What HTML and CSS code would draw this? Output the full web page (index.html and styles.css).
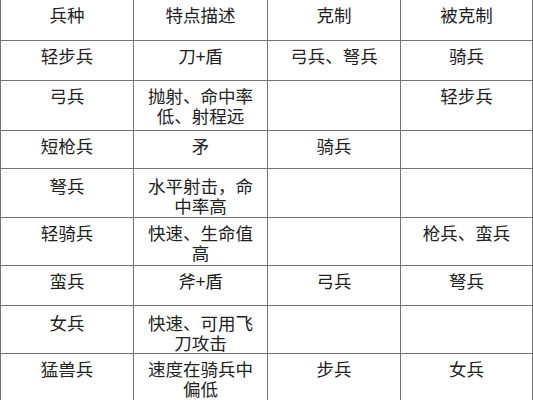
FILE: index.html
```html
<!DOCTYPE html>
<html lang="zh-CN">
<head>
<meta charset="utf-8">
<title>兵种</title>
<link rel="stylesheet" href="styles.css">
</head>
<body>
<table class="grid">
  <colgroup>
    <col class="c1"><col class="c2"><col class="c3"><col class="c4">
  </colgroup>
  <tr class="head h40"><td>兵种</td><td>特点描述</td><td>克制</td><td>被克制</td></tr>
  <tr class="h40"><td>轻步兵</td><td>刀+盾</td><td>弓兵、弩兵</td><td>骑兵</td></tr>
  <tr class="h50"><td>弓兵</td><td>抛射、命中率低、射程远</td><td></td><td>轻步兵</td></tr>
  <tr class="h38"><td>短枪兵</td><td>矛</td><td>骑兵</td><td></td></tr>
  <tr class="h49 low"><td>弩兵</td><td>水平射击，命中率高</td><td></td><td></td></tr>
  <tr class="h48"><td>轻骑兵</td><td>快速、生命值高</td><td></td><td>枪兵、蛮兵</td></tr>
  <tr class="h40"><td>蛮兵</td><td>斧+盾</td><td>弓兵</td><td>弩兵</td></tr>
  <tr class="h48 low"><td>女兵</td><td>快速、可用飞刀攻击</td><td></td><td></td></tr>
  <tr class="h52"><td>猛兽兵</td><td>速度在骑兵中偏低</td><td>步兵</td><td>女兵</td></tr>
</table>
</body>
</html>
```

FILE: styles.css
```css
html, body {
  margin: 0;
  padding: 0;
  background: #ffffff;
}

body {
  font-family: "Noto Sans CJK SC", "Liberation Sans", sans-serif;
  color: #222222;
  overflow: hidden;
}

.grid {
  border-collapse: collapse;
  table-layout: fixed;
  width: 532px;
  margin: 0;
}

.c1 { width: 133px; }
.c2 { width: 134px; }
.c3 { width: 133px; }
.c4 { width: 132px; }

.grid td {
  border: 1px solid #737373;
  text-align: center;
  vertical-align: top;
  font-size: 17.5px;
  line-height: 20px;
  padding: 5px 12px 0;
  word-break: break-all;
}

.grid .head td {
  border-top: none;
}

.grid .low td {
  padding-top: 7px;
}

.h40 { height: 40px; }
.h50 { height: 50px; }
.h38 { height: 38px; }
.h49 { height: 49px; }
.h48 { height: 48px; }
.h52 { height: 52px; }
```
